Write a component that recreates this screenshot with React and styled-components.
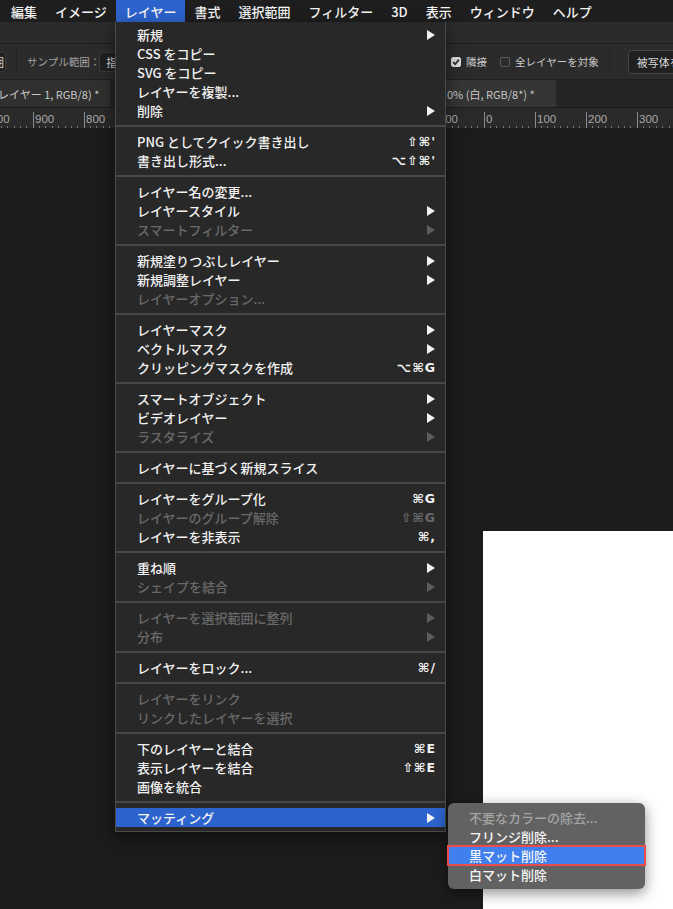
import React from 'react';
import styled, { createGlobalStyle } from 'styled-components';

const GlobalStyle = createGlobalStyle`
  html, body {
    margin: 0;
    padding: 0;
    background: #1c1c1c;
  }
  body {
    font-family: "Noto Sans CJK JP", "Liberation Sans", sans-serif;
  }
`;

const menuTitles = ['編集', 'イメージ', 'レイヤー', '書式', '選択範囲', 'フィルター', '3D', '表示', 'ウィンドウ', 'ヘルプ'];

const menuGroups = [
    [
        { label: '新規', sub: true },
        { label: 'CSS をコピー' },
        { label: 'SVG をコピー' },
        { label: 'レイヤーを複製...' },
        { label: '削除', sub: true },
    ],
    [
        { label: 'PNG としてクイック書き出し', keys: "⇧⌘'" },
        { label: '書き出し形式...', keys: "⌥⇧⌘'" },
    ],
    [
        { label: 'レイヤー名の変更...' },
        { label: 'レイヤースタイル', sub: true },
        { label: 'スマートフィルター', sub: true, off: true },
    ],
    [
        { label: '新規塗りつぶしレイヤー', sub: true },
        { label: '新規調整レイヤー', sub: true },
        { label: 'レイヤーオプション...', off: true },
    ],
    [
        { label: 'レイヤーマスク', sub: true },
        { label: 'ベクトルマスク', sub: true },
        { label: 'クリッピングマスクを作成', keys: '⌥⌘G' },
    ],
    [
        { label: 'スマートオブジェクト', sub: true },
        { label: 'ビデオレイヤー', sub: true },
        { label: 'ラスタライズ', sub: true, off: true },
    ],
    [{ label: 'レイヤーに基づく新規スライス' }],
    [
        { label: 'レイヤーをグループ化', keys: '⌘G' },
        { label: 'レイヤーのグループ解除', keys: '⇧⌘G', off: true },
        { label: 'レイヤーを非表示', keys: '⌘,' },
    ],
    [
        { label: '重ね順', sub: true },
        { label: 'シェイプを結合', sub: true, off: true },
    ],
    [
        { label: 'レイヤーを選択範囲に整列', sub: true, off: true },
        { label: '分布', sub: true, off: true },
    ],
    [{ label: 'レイヤーをロック...', keys: '⌘/' }],
    [
        { label: 'レイヤーをリンク', off: true },
        { label: 'リンクしたレイヤーを選択', off: true },
    ],
    [
        { label: '下のレイヤーと結合', keys: '⌘E' },
        { label: '表示レイヤーを結合', keys: '⇧⌘E' },
        { label: '画像を統合' },
    ],
    [{ label: 'マッティング', sub: true, active: true }],
];

const mattingItems = [
    { label: '不要なカラーの除去...', off: true },
    { label: 'フリンジ削除...' },
    { label: '黒マット削除', active: true },
    { label: '白マット削除' },
];

// the left document is mostly hidden behind the open menu
const leftRuler = ['1000', '900', '800'];
const rightRuler = ['-100', '0', '100', '200', '300', '400'];

function App() {
    return (
        <>
            <GlobalStyle />
            <Screen>
                <MenuBar>
                    {menuTitles.map((t) => (
                        <MenuTitle key={t} $active={t === 'レイヤー'}>{t}</MenuTitle>
                    ))}
                </MenuBar>

                <ToolStrip />

                <OptionsBar>
                    <BarPart $width={116}>
                        <CutBox>囲</CutBox>
                        <Divider />
                        <OptLabel>サンプル範囲：</OptLabel>
                        <SelectBox>指定</SelectBox>
                    </BarPart>
                    <BarPart $pad={335}>
                        <Check $on>
                            <svg width="8" height="8" viewBox="0 0 8 8">
                                <path d="M1.2 4.2 L3.2 6.2 L6.9 1.6" fill="none" stroke="#2a2a2a" strokeWidth="1.8" />
                            </svg>
                        </Check>
                        <OptLabel $bright>隣接</OptLabel>
                        <Check />
                        <OptLabel $bright>全レイヤーを対象</OptLabel>
                        <Divider />
                        <OptButton>被写体を選択</OptButton>
                    </BarPart>
                </OptionsBar>

                <TabBar>
                    <DocTab $width={112}>レイヤー 1, RGB/8) *</DocTab>
                    <TabGap />
                    <DocTab $width={110} $active>0% (白, RGB/8*) *</DocTab>
                </TabBar>

                <RulerRow>
                    <RulerPane $width={116} $shift={-18}>
                        {leftRuler.map((n) => (
                            <RulerMark key={n}>{n}</RulerMark>
                        ))}
                    </RulerPane>
                    <RulerPane $width={557} $pad={330} $shift={-13}>
                        {rightRuler.map((n) => (
                            <RulerMark key={n}>{n}</RulerMark>
                        ))}
                    </RulerPane>
                </RulerRow>

                <Pasteboard>
                    <DocSheet />
                </Pasteboard>

                <DropMenu>
                    {menuGroups.map((group, gi) => (
                        <React.Fragment key={gi}>
                            {gi > 0 && <Separator />}
                            {group.map((item) => (
                                <MenuItem key={item.label} $off={item.off} $active={item.active}>
                                    <span>{item.label}</span>
                                    {item.keys && <Keys>{item.keys}</Keys>}
                                    {item.sub && <Arrow $off={item.off} />}
                                </MenuItem>
                            ))}
                        </React.Fragment>
                    ))}
                </DropMenu>

                <SubMenu>
                    {mattingItems.map((item) => (
                        <SubItem key={item.label} $off={item.off} $active={item.active}>
                            {item.label}
                        </SubItem>
                    ))}
                </SubMenu>
            </Screen>
        </>
    );
}

export default App;

const Screen = styled.div`
  position: relative;
  width: 673px;
  height: 909px;
  overflow: hidden;
  display: flex;
  flex-direction: column;
  background: #1c1c1c;
  color: #f2f2f2;
`;

const MenuBar = styled.div`
  height: 22px;
  flex: none;
  display: flex;
  align-items: stretch;
  padding-left: 2px;
  background: #1e1e1e;
`;

const MenuTitle = styled.div`
  display: flex;
  align-items: center;
  padding: 0 9px;
  font-size: 13px;
  font-weight: 500;
  color: #f4f4f4;
  background: ${(p) => (p.$active ? '#2d63cc' : 'transparent')};
`;

const ToolStrip = styled.div`
  height: 21px;
  flex: none;
  background: #2b2b2b;
  border-bottom: 1px solid #1e1e1e;
`;

const OptionsBar = styled.div`
  height: 35px;
  flex: none;
  display: flex;
  align-items: center;
  background: #2b2b2b;
  border-bottom: 1px solid #1f1f1f;
`;

const BarPart = styled.div`
  flex: none;
  width: ${(p) => (p.$width ? `${p.$width}px` : 'auto')};
  padding-left: ${(p) => p.$pad || 0}px;
  display: flex;
  align-items: center;
  gap: 5px;
  overflow: hidden;
`;

const CutBox = styled.div`
  margin-left: -14px;
  width: 20px;
  height: 20px;
  flex: none;
  box-sizing: border-box;
  display: flex;
  align-items: center;
  justify-content: flex-end;
  padding-right: 1px;
  background: #1f1f1f;
  border: 1px solid #3a3a3a;
  border-radius: 3px;
  color: #d8d8d8;
  font-size: 11px;
`;

const Divider = styled.div`
  width: 1px;
  height: 26px;
  flex: none;
  background: #232323;
  margin: 0 5px;
`;

const OptLabel = styled.span`
  color: ${(p) => (p.$bright ? '#c9c9c9' : '#a2a2a2')};
  font-size: 10.5px;
  white-space: nowrap;
`;

const SelectBox = styled.div`
  height: 20px;
  width: 60px;
  flex: none;
  box-sizing: border-box;
  display: flex;
  align-items: center;
  margin-left: -6px;
  padding-left: 6px;
  background: #1f1f1f;
  border: 1px solid #3a3a3a;
  border-radius: 3px;
  color: #dcdcdc;
  font-size: 11px;
  white-space: nowrap;
`;

const Check = styled.span`
  width: 10px;
  height: 10px;
  flex: none;
  box-sizing: border-box;
  display: inline-flex;
  align-items: center;
  justify-content: center;
  margin-left: ${(p) => (p.$on ? '0' : '8px')};
  border-radius: 2px;
  background: ${(p) => (p.$on ? '#dcdcdc' : 'transparent')};
  border: 1px solid ${(p) => (p.$on ? '#dcdcdc' : '#5a5a5a')};
`;

const OptButton = styled.div`
  height: 24px;
  box-sizing: border-box;
  display: flex;
  align-items: center;
  padding: 0 8px;
  margin-left: 8px;
  background: #202020;
  border: 1px solid #454545;
  border-radius: 4px;
  color: #d6d6d6;
  font-size: 11px;
  white-space: nowrap;
`;

const TabBar = styled.div`
  height: 27px;
  flex: none;
  display: flex;
  align-items: stretch;
  background: #252525;
  border-bottom: 1px solid #1c1c1c;
`;

const DocTab = styled.div`
  width: ${(p) => p.$width}px;
  flex: none;
  display: flex;
  align-items: center;
  box-sizing: border-box;
  padding-left: ${(p) => (p.$active ? '1px' : '0')};
  margin-left: ${(p) => (p.$active ? '0' : '-2px')};
  background: ${(p) => (p.$active ? '#353535' : '#303030')};
  color: #c8c8c8;
  font-size: 11px;
  white-space: nowrap;
  overflow: hidden;
`;

const TabGap = styled.div`
  width: 336px;
  flex: none;
`;

const RulerRow = styled.div`
  height: 20px;
  flex: none;
  display: flex;
  background: #2a2a2a;
  border-bottom: 1px solid #1a1a1a;
  overflow: hidden;
`;

const RulerPane = styled.div`
  flex: none;
  width: ${(p) => p.$width}px;
  box-sizing: border-box;
  padding-left: ${(p) => p.$pad || 0}px;
  display: flex;
  overflow: hidden;
  & > :first-child {
    margin-left: ${(p) => p.$shift}px;
  }
`;

const RulerMark = styled.div`
  width: 51px;
  flex: none;
  box-sizing: border-box;
  border-left: 1px solid #8a8a8a;
  margin-top: 4px;
  padding-left: 1px;
  font-family: "Liberation Sans", sans-serif;
  font-size: 11.5px;
  line-height: 14px;
  color: #a8a8a8;
  background: repeating-linear-gradient(to right, transparent 0 5px, #777 5px 6px, transparent 6px 6.4px) left bottom / 100% 2px no-repeat;
`;

const Pasteboard = styled.div`
  flex: 1;
  background: #1c1c1c;
  padding: 402px 0 0 483px;
`;

const DocSheet = styled.div`
  height: 400px;
  background: #ffffff;
`;

const DropMenu = styled.div`
  position: absolute;
  left: 115px;
  top: 22px;
  width: 331px;
  box-sizing: border-box;
  padding: 3px 0 4px;
  background: #282828;
  border: 1px solid #4a4a4a;
  border-top: none;
  box-shadow: 0 6px 16px rgba(0, 0, 0, 0.5);
`;

const MenuItem = styled.div`
  height: 19px;
  display: flex;
  align-items: center;
  padding: 0 9px 0 21px;
  font-size: 13px;
  font-weight: 500;
  white-space: nowrap;
  color: ${(p) => (p.$off ? '#696969' : '#f2f2f2')};
  background: ${(p) => (p.$active ? '#2d63cc' : 'transparent')};
  & > span:first-child {
    flex: 1;
  }
`;

const Keys = styled.span`
  font-family: "DejaVu Sans", "Noto Sans CJK JP", sans-serif;
  font-size: 12.5px;
  font-weight: 600;
  letter-spacing: 1px;
`;

const Arrow = styled.span`
  width: 0;
  height: 0;
  margin-right: 1px;
  border-top: 5px solid transparent;
  border-bottom: 5px solid transparent;
  border-left: 8px solid ${(p) => (p.$off ? '#5c5c5c' : '#f2f2f2')};
`;

const Separator = styled.div`
  height: 2px;
  margin: 5px 0;
  background: #474747;
`;

const SubMenu = styled.div`
  position: absolute;
  left: 448px;
  top: 803px;
  width: 197px;
  box-sizing: border-box;
  padding: 5px 0;
  background: #626262;
  border-radius: 6px;
  box-shadow: 0 4px 14px rgba(0, 0, 0, 0.45);
`;

const SubItem = styled.div`
  height: 19px;
  display: flex;
  align-items: center;
  padding-left: 21px;
  font-size: 13px;
  font-weight: 500;
  white-space: nowrap;
  color: ${(p) => (p.$off ? '#a4a4a4' : '#f6f6f6')};
  background: ${(p) => (p.$active ? '#3f80ee' : 'transparent')};
  outline: ${(p) => (p.$active ? '2px solid #ea4b4b' : 'none')};
  outline-offset: -1px;
`;
